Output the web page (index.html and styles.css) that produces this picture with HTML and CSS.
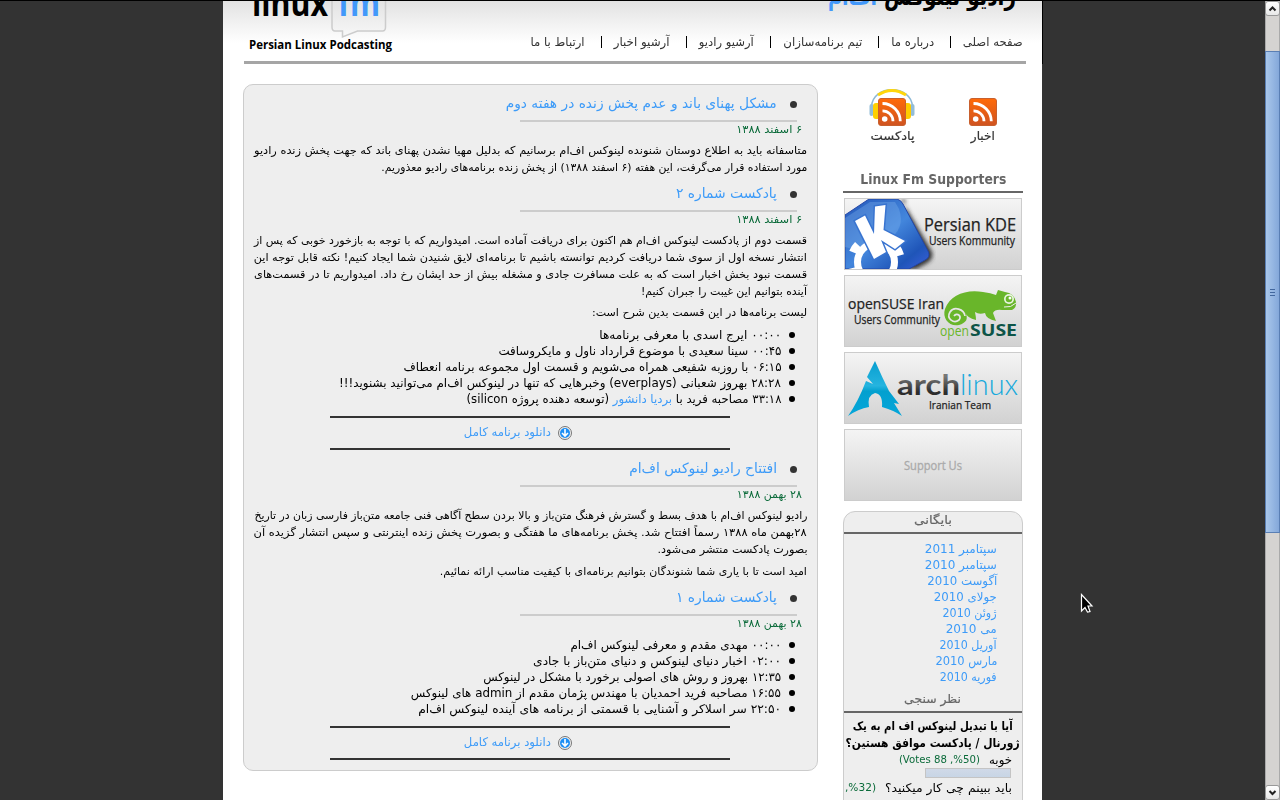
FILE: index.html
```html
<!DOCTYPE html>
<html lang="fa" dir="rtl">
<head>
<meta charset="utf-8">
<title>Linux Fm</title>
<link rel="stylesheet" href="styles.css">
</head>
<body>
<div class="page">
  <header class="header">
    <div class="logos">
      <svg class="logo-fa" width="200" height="30" direction="rtl">
        <text class="logo-black" x="200" y="4" textLength="132" lengthAdjust="spacingAndGlyphs">رادیو لینوکس</text>
        <text class="logo-blue" x="61" y="4" textLength="49" lengthAdjust="spacingAndGlyphs">اف‌ام</text>
      </svg>
      <svg class="logo-en" width="150" height="56" direction="ltr">
        <defs><linearGradient id="bub" x1="0" y1="0" x2="0" y2="1"><stop offset="0" stop-color="#ddd"/><stop offset="1" stop-color="#f8f8f8"/></linearGradient></defs>
        <path d="M83-9V26q0 4 3 4h7.500v6l15-6h25q3 0 3-4V-9z" fill="url(#bub)" stroke="#ccc" stroke-width="1.500"/>
        <text class="logo-word" x="3" y="15" textLength="76" lengthAdjust="spacingAndGlyphs">linux</text>
        <text class="logo-word logo-fm" x="89" y="15" textLength="42" lengthAdjust="spacingAndGlyphs">fm</text>
        <text class="tagline" x="0" y="48" textLength="143" lengthAdjust="spacingAndGlyphs">Persian Linux Podcasting</text>
      </svg>
    </div>
    <nav class="nav">
      <a><span data-w="60">صفحه اصلی</span></a><a><span data-w="43">درباره ما</span></a><a><span data-w="79">تیم برنامه‌سازان</span></a><a><span data-w="55">آرشیو رادیو</span></a><a><span data-w="56">آرشیو اخبار</span></a><a><span data-w="54">ارتباط با ما</span></a>
    </nav>
  </header>

  <div class="columns">
    <aside class="sidebar">
      <div class="feeds">
        <div class="feed">
          <svg width="50" height="40" viewBox="0 0 50 40">
            <defs>
              <linearGradient id="org" x1="0" y1="0" x2="0" y2="1"><stop offset="0" stop-color="#ff6a08"/><stop offset="1" stop-color="#cf5320"/></linearGradient>
              <symbol id="rss" viewBox="0 0 28 28"><rect x=".5" y=".5" width="27" height="27" rx="2.500" fill="url(#org)" stroke="#c8602e"/><circle cx="6.700" cy="21" r="2.800" fill="#fff"/><path d="M4.500 12.800A10.500 10.500 0 0 1 15 23.300M4.500 5.500A17.800 17.800 0 0 1 22.300 23.300" fill="none" stroke="#fff" stroke-width="2.800"/></symbol>
            </defs>
            <use href="#rss" x="11" y="11" width="28" height="28"/>
          </svg>
          <span data-w="24">اخبار</span>
        </div>
        <div class="feed">
          <svg width="50" height="40" viewBox="0 0 50 40">
            <path d="M4.500 20C5-3 45-3 45.500 20" fill="none" stroke="#8db9d6" stroke-width="1.500"/>
            <path d="M11 8Q25-1 39 8" fill="none" stroke="#ffd60a" stroke-width="3"/>
            <rect x="2.500" y="17" width="4" height="12" rx="2" fill="#93bdd8"/><rect x="43.500" y="17" width="4" height="12" rx="2" fill="#93bdd8"/>
            <rect x="6" y="16" width="9" height="16" rx="3" fill="#ffd000"/><rect x="35" y="16" width="9" height="16" rx="3" fill="#ffcb00"/>
            <use href="#rss" x="11" y="11" width="28" height="28"/>
          </svg>
          <span class="shifted" data-w="44">پادکست</span>
        </div>
      </div>
      <h2 class="supporters"><span data-w="146" data-c="1">Linux Fm Supporters</span></h2>
      <div class="cards" dir="ltr">
        <div class="card"><svg width="176" height="70">
          <defs><linearGradient id="kde" x1="0" y1="0" x2="1" y2="1"><stop offset="0" stop-color="#2458ba"/><stop offset=".5" stop-color="#4386dc"/><stop offset=".8" stop-color="#1f55b8"/><stop offset="1" stop-color="#3b60dc"/></linearGradient><filter id="sh"><feGaussianBlur stdDeviation="2"/></filter></defs>
          <path d="M56 0L87 53Q89 60 82 64L71 70H60V0z" fill="#333" filter="url(#sh)"/>
          <path d="M0 16L24 0H52Q56 1 58 5L83 52Q86 58 80 61L64 70H0z" fill="url(#kde)" stroke="#2446a6"/>
          <path d="M0 19L25 3H50L54 10Q61 30 42 42Q20 55 0 48z" fill="#8bbcf2" opacity=".3"/>
          <circle cx="31" cy="63" r="18.500" fill="none" stroke="#fff" stroke-width="7"/>
          <circle cx="31" cy="63" r="25" fill="none" stroke="#fff" stroke-width="8" stroke-dasharray="9 17.180" transform="rotate(203 31 63)"/>
          <path d="M10 22L20 16.500L29 35L30 7.500L40.500 6L38.500 31L60 42L50 50L36 41L41 53L29 60z" fill="#fff" stroke="#3974d0" stroke-width="3" paint-order="stroke"/>
          <text class="ct" x="79" y="32" font-size="18" textLength="92" lengthAdjust="spacingAndGlyphs">Persian KDE</text>
          <text class="ct" x="84" y="46" font-size="12" textLength="86" lengthAdjust="spacingAndGlyphs">Users Kommunity</text></svg></div>
        <div class="card"><svg width="176" height="70">
          <path d="M114 49C104 51 97 42 100 33C105 19 121 13 138 16Q146 17 151 19L153 14L160 16Q169 17 171 26Q172 31 167 34L157 34Q150 33 148 37L151 45Q141 43 140 37Q134 39 130 36Q131 41 131 44Q122 42 120 36C124 43 121 47 114 49z" fill="#69b62a"/>
          <path d="M120 40C119 33 109 30 105 36C101 43 109 48 114 44C117 40 112 36 109 40" fill="none" stroke="#e6e6e6" stroke-width="1.700"/>
          <circle cx="164" cy="23" r="5" fill="#e9f5e0"/><circle cx="164" cy="23" r="3.300" fill="#69b62a"/><circle cx="165" cy="22" r="1.500" fill="#fff"/><path d="M159 31Q166 32 171 27" fill="none" stroke="#eee"/>
          <text class="ct" x="3" y="33" font-size="15" textLength="96" lengthAdjust="spacingAndGlyphs">openSUSE Iran</text>
          <text class="ct" x="9" y="48" font-size="12" textLength="86" lengthAdjust="spacingAndGlyphs">Users Community</text>
          <text x="95" y="60" font-size="15" fill="#69b62a" textLength="29" lengthAdjust="spacingAndGlyphs">open</text>
          <text x="125" y="60" font-size="16" font-weight="bold" fill="#0d5447" textLength="47" lengthAdjust="spacingAndGlyphs">SUSE</text></svg></div>
        <div class="card"><svg width="176" height="70">
          <defs><linearGradient id="ar" x1="0" y1="0" x2="0" y2="1"><stop offset="0" stop-color="#079ed0"/><stop offset=".45" stop-color="#25b4df"/><stop offset=".55" stop-color="#03a0cf"/><stop offset="1" stop-color="#05a6da"/></linearGradient>
          <linearGradient id="ag" x1="0" y1="0" x2="0" y2="1"><stop offset=".3" stop-color="#777"/><stop offset=".75" stop-color="#2c2c2c"/></linearGradient></defs>
          <path d="M30 8Q37 24 44 38L54 51L49 50L57 63Q48 57 37 54Q38 41 30 40Q22 42 24 54Q13 56 3 63Q13 49 21 28L28 31L22 24z" fill="url(#ar)"/>
          <text class="arch" x="52" y="42" font-size="29" fill="url(#ag)" textLength="63" lengthAdjust="spacingAndGlyphs">arch</text>
          <text class="thin" x="115" y="42" font-size="29" fill="#16a9dc" textLength="58" lengthAdjust="spacingAndGlyphs">linux</text>
          <text class="ct" x="84" y="56" font-size="11.500" textLength="62" lengthAdjust="spacingAndGlyphs">Iranian Team</text></svg></div>
        <div class="card"><svg width="176" height="70"><text x="59" y="40" font-size="12" fill="#aaa" stroke="#aaa" stroke-width=".3" textLength="58" lengthAdjust="spacingAndGlyphs">Support Us</text></svg></div>
      </div>
      <div class="widgets">
        <h3 class="wtitle first"><span data-w="38" data-c="1">بایگانی</span></h3>
        <ul class="archive">
          <li><span data-w="72">سپتامبر 2011</span></li><li><span data-w="72">سپتامبر 2010</span></li><li><span data-w="70">آگوست 2010</span></li><li><span data-w="63">جولای 2010</span></li><li><span data-w="54">ژوئن 2010</span></li><li><span data-w="51">می 2010</span></li><li><span data-w="57">آوریل 2010</span></li><li><span data-w="62">مارس 2010</span></li><li><span data-w="57">فوریه 2010</span></li>
        </ul>
        <h3 class="wtitle"><span data-w="57" data-c="1">نظر سنجی</span></h3>
        <div class="poll">
          <p class="question"><span data-w="160" data-c="1">آیا با تبدیل لینوکس اف ام به یک</span></p>
          <p class="question"><span data-w="174" data-c="1">ژورنال / پادکست موافق هستین؟</span></p>
          <p class="option"><span data-w="23">خوبه</span><small data-w="81">(50&rlm;%, 88 Votes)</small></p>
          <div class="bar"></div>
          <p class="option"><span data-w="127">باید ببینم چی کار میکنید؟</span><small data-w="31">(32&rlm;%,</small></p>
        </div>
      </div>
    </aside>

    <main class="posts">
      <article class="post p1">
        <h1><span data-w="271">مشکل پهنای باند و عدم پخش زنده در هفته دوم</span></h1>
        <div class="date"><span data-w="66">۶ اسفند ۱۳۸۸</span></div>
        <p><span data-w="553">متاسفانه باید به اطلاع دوستان شنونده لینوکس اف‌ام برسانیم که بدلیل مهیا نشدن پهنای باند که جهت پخش زنده رادیو</span><span data-w="426">مورد استفاده قرار می‌گرفت، این هفته (۶ اسفند ۱۳۸۸) از پخش زنده برنامه‌های رادیو معذوریم.</span></p>
      </article>
      <article class="post p2">
        <h1><span data-w="101">پادکست شماره ۲</span></h1>
        <div class="date"><span data-w="66">۶ اسفند ۱۳۸۸</span></div>
        <p><span data-w="553">قسمت دوم از پادکست لینوکس اف‌ام هم اکنون برای دریافت آماده است. امیدواریم که با توجه به بازخورد خوبی که پس از</span><span data-w="553">انتشار نسخه اول از سوی شما دریافت کردیم توانسته باشیم تا برنامه‌ای لایق شنیدن شما ایجاد کنیم! نکته قابل توجه این</span><span data-w="553">قسمت نبود بخش اخبار است که به علت مسافرت جادی و مشغله بیش از حد ایشان رخ داد. امیدواریم تا در قسمت‌های</span><span data-w="166">آینده بتوانیم این غیبت را جبران کنیم!</span></p>
        <p><span data-w="215">لیست برنامه‌ها در این قسمت بدین شرح است:</span></p>
        <ul>
          <li><span data-w="182">۰۰:۰۰ ایرج اسدی با معرفی برنامه‌ها</span></li>
          <li><span data-w="283">۰۰:۴۵ سینا سعیدی با موضوع قرارداد ناول و مایکروسافت</span></li>
          <li><span data-w="378">۰۶:۱۵ با روزبه شفیعی همراه می‌شویم و قسمت اول مجموعه برنامه انعطاف</span></li>
          <li><span data-w="442">۲۸:۲۸ بهروز شعبانی (everplays) وخبرهایی که تنها در لینوکس اف‌ام می‌توانید بشنوید!!!</span></li>
          <li><span data-w="315">۳۳:۱۸ مصاحبه فرید با <a>بردیا دانشور</a> (توسعه دهنده پروژه silicon)</span></li>
        </ul>
        <div class="download"><svg width="16" height="16"><circle cx="8" cy="8" r="6.500" fill="#eee" stroke="#777"/><circle cx="8" cy="8" r="5" fill="#1e8ff5"/><path d="M8 4v7M5 8l3 3l3-3" fill="none" stroke="#fff" stroke-width="1.600"/></svg><span data-w="87">دانلود برنامه کامل</span></div>
      </article>
      <article class="post p3">
        <h1><span data-w="148">افتتاح رادیو لینوکس اف‌ام</span></h1>
        <div class="date"><span data-w="65">۲۸ بهمن ۱۳۸۸</span></div>
        <p><span data-w="553">رادیو لینوکس اف‌ام با هدف بسط و گسترش فرهنگ متن‌باز و بالا بردن سطح آگاهی فنی جامعه متن‌باز فارسی زبان در تاریخ</span><span data-w="553">۲۸بهمن ماه ۱۳۸۸ رسماً افتتاح شد. پخش برنامه‌های ما هفتگی و بصورت پخش زنده اینترنتی و سپس انتشار گزیده آن</span><span data-w="150">بصورت پادکست منتشر می‌شود.</span></p>
        <p><span data-w="367">امید است تا با یاری شما شنوندگان بتوانیم برنامه‌ای با کیفیت مناسب ارائه نمائیم.</span></p>
      </article>
      <article class="post p4">
        <h1><span data-w="101">پادکست شماره ۱</span></h1>
        <div class="date"><span data-w="65">۲۸ بهمن ۱۳۸۸</span></div>
        <ul>
          <li><span data-w="211">۰۰:۰۰ مهدی مقدم و معرفی لینوکس اف‌ام</span></li>
          <li><span data-w="248">۰۲:۰۰ اخبار دنیای لینوکس و دنیای متن‌باز با جادی</span></li>
          <li><span data-w="298">۱۲:۳۵ بهروز و روش های اصولی برخورد با مشکل در لینوکس</span></li>
          <li><span data-w="370">۱۶:۵۵ مصاحبه فرید احمدیان با مهندس پژمان مقدم از admin های لینوکس</span></li>
          <li><span data-w="363">۲۲:۵۰ سر اسلاکر و آشنایی با قسمتی از برنامه های آینده لینوکس اف‌ام</span></li>
        </ul>
        <div class="download"><svg width="16" height="16"><circle cx="8" cy="8" r="6.500" fill="#eee" stroke="#777"/><circle cx="8" cy="8" r="5" fill="#1e8ff5"/><path d="M8 4v7M5 8l3 3l3-3" fill="none" stroke="#fff" stroke-width="1.600"/></svg><span data-w="87">دانلود برنامه کامل</span></div>
      </article>
    </main>
  </div>
</div>

<div class="edge"></div>
<div class="scrollbar">
  <div class="sb-btn up"><svg width="13" height="13"><path d="M3.500 8.500l3-3l3 3" fill="none" stroke="#222" stroke-width="2"/></svg></div>
  <div class="thumb"><i></i><i></i><i></i></div>
  <div class="sb-btn down"><svg width="13" height="13"><path d="M3.500 5l3 3l3-3" fill="none" stroke="#222" stroke-width="2"/></svg></div>
</div>
<svg class="cursor" width="14" height="21"><path d="M1.500 1.500V18L5 14.500L7.500 19L10 18.500L8 13H12z" fill="#000" stroke="#fff" stroke-width="1.200"/></svg>
<script src="fit.js"></script>
</body>
</html>
```

FILE: fit.js
```js
// Condense or widen each line horizontally to its set measure.
document.querySelectorAll('[data-w]').forEach(function (el) {
  var target = parseFloat(el.dataset.w);
  var natural = el.getBoundingClientRect().width;
  var shift = target - natural;
  el.style.transform = 'scaleX(' + target / natural + ')';
  if (el.dataset.c) {
    el.style.transformOrigin = 'center';
    el.style.marginInline = shift / 2 + 'px';
  } else {
    el.style.marginInlineEnd = shift + 'px';
  }
});
```

FILE: styles.css
```css
* { box-sizing: border-box; margin: 0; padding: 0; }
body {
  height: 800px;
  overflow: hidden;
  background: #333;
  border-top: 1px solid #000;
  display: flex;
  direction: ltr;
  font-family: "DejaVu Sans Condensed", "DejaVu Sans", sans-serif;
  font-size: 12px;
  color: #000;
}
[data-w] { display: inline-block; white-space: nowrap; transform-origin: right; }
svg text { font-family: "Open Sans", "Noto Sans", sans-serif; }

.page { width: 819px; height: 799px; margin-left: 223px; background: #fff; direction: rtl; overflow: hidden; flex: none; }
.edge { width: 1px; height: 63px; background: #000; flex: none; }
.header { height: 63px; background: linear-gradient(#e2e2e2, #fff 42px); display: flex; flex-direction: column; padding: 0 17px 0 21px; position: relative; }
.header::after { content: ""; position: absolute; left: 21px; right: 16px; bottom: 0; height: 3px; background: #a5a5a5; }
.logos { display: flex; justify-content: space-between; height: 28px; padding-left: 5px; }
.logos svg { overflow: hidden; flex: none; }
.logo-fa { margin-right: 9px; }
.logo-fa text { font: bold 25px "DejaVu Sans", sans-serif; }
.logo-blue { fill: #4298fa; }
svg text.logo-word { font: bold 36px "Open Sans", sans-serif; }
svg text.logo-fm { fill: #4298fa; }
svg text.tagline { font: bold 12px "Open Sans", sans-serif; }
.nav { display: flex; font-family: "DejaVu Sans", sans-serif; color: #333; padding-right: 2px; height: 26px; align-items: center; }
.nav a { display: flex; align-items: center; line-height: 16px; }
.nav a + a { margin-right: 12.5px; padding-right: 16.5px; position: relative; }
.nav a + a::before { content: ""; position: absolute; right: 0; top: 2px; width: 1px; height: 12px; background: #000; }

.columns { display: flex; gap: 25px; padding: 20px 19px 0 20px; }
.sidebar { width: 180px; flex: none; }
.feeds { display: flex; height: 84px; padding-top: 3px; justify-content: space-between; }
.feed { display: flex; flex-direction: column; align-items: center; width: 50px; font: 12px/18px "DejaVu Sans", sans-serif; color: #333; }
.feed:first-child { margin-right: 15px; }
.feed:last-child { margin-left: 24px; }
.feed span { -webkit-text-stroke: .2px #333; }
.feed .shifted { position: relative; left: 1px; }
.supporters { height: 25px; border-bottom: 2px solid #666; font: bold 14px/23px "DejaVu Sans", sans-serif; color: #666; display: flex; justify-content: center; }
.cards { display: flex; flex-direction: column; gap: 5px; padding: 5px 1px 0; }
.card { height: 72px; border: 1px solid #ccc; background: linear-gradient(#f4f4f4, #d2d2d2); }
.card svg { display: block; overflow: hidden; }
.ct { fill: #222; stroke: #222; stroke-width: .25px; }
.card .thin { font-family: Lato, sans-serif; font-weight: 300; }
.card .arch { font-family: Lato, sans-serif; font-weight: 700; }
.widgets { margin-top: 10px; height: 400px; border: 1px solid #ccc; border-radius: 12px 12px 0 0; background: #eee; overflow: hidden; }
.wtitle { height: 27px; border-bottom: 2px solid #666; font: normal 12px/26px "DejaVu Sans", sans-serif; color: #666; -webkit-text-stroke: .2px #666; display: flex; justify-content: center; }
.wtitle.first { height: 22px; line-height: 17px; }
.archive { list-style: none; padding: 7px 25px 1px 0; color: #3d9bf8; font-size: 12px; }
.archive li { height: 16px; line-height: 16px; }
.poll { padding-top: 5px; }
.question { font-weight: bold; line-height: 17px; height: 17px; display: flex; justify-content: center; }
.option { display: flex; gap: 9px; height: 16px; line-height: 16px; padding-right: 10px; }
.option small { font-size: 11px; color: #0b6b3a; }
.bar { width: 86px; height: 10px; margin: 0 11px 2px 0; border: 1px solid #c4c4c4; background: linear-gradient(#d0d9e8, #c8d5e5); }

.posts { width: 575px; height: 687px; border: 1px solid #ccc; border-radius: 10px; background: #eee; flex: none; padding: 0 10px 0 10px; }
.p1 { height: 90px; }
.p2 { height: 275px; }
.p3 { height: 129px; }
.post h1 { height: 37px; width: 277px; margin-right: 10px; border-bottom: 2px solid #ccc; font: normal 14px/37px "DejaVu Sans", sans-serif; color: #3d9bf8; padding-right: 20px; position: relative; }
.post h1::before { content: ""; position: absolute; right: 0; top: 16px; width: 7px; height: 7px; border-radius: 50%; background: #333; }
.date { height: 20px; line-height: 15px; padding-right: 5px; color: #0b6b3a; font-size: 11px; }
.post p { font-size: 11px; line-height: 17px; margin-bottom: 5px; }
.p2 p { margin-bottom: 4.5px; }
.p2 p:first-of-type { margin-bottom: 4px; }
.post p span { display: block; width: max-content; height: 17px; }
.post ul { list-style: none; padding: 1px 26px 0 0; }
.post li { height: 16px; line-height: 16px; position: relative; }
.post li::before { content: ""; position: absolute; right: -14px; top: 5px; width: 6px; height: 6px; border-radius: 50%; background: #000; }
.post a, .download { color: #3d9bf8; }
.p2 p + ul { padding-top: 1.5px; }
.download { width: 400px; height: 34px; margin: 9px 77px 0 0; padding-right: 157px; border: solid #333; border-width: 2px 0; display: flex; align-items: center; gap: 6px; }
.download span { position: relative; top: -1px; }

.scrollbar { width: 15px; height: 799px; margin-left: auto; background: #d5d3d1; border: solid #aaa; border-width: 0 1px; display: flex; flex-direction: column; }
.sb-btn { height: 15px; flex: none; border: 1px solid #999; border-radius: 3px; background: linear-gradient(#fff, #e8e8e8); margin: 0 -1px; }
.sb-btn svg { display: block; }
.down { margin-top: auto; }
.thumb { height: 482px; margin: 35px -1px 0; border: 1px solid #5a7fb4; background: linear-gradient(90deg, #a9c7eb, #84a8da); display: flex; flex-direction: column; align-items: center; justify-content: center; gap: 2px; }
.thumb i { width: 5px; height: 1px; background: #42679e; }
.cursor { position: absolute; left: 1080px; top: 593px; }
```
